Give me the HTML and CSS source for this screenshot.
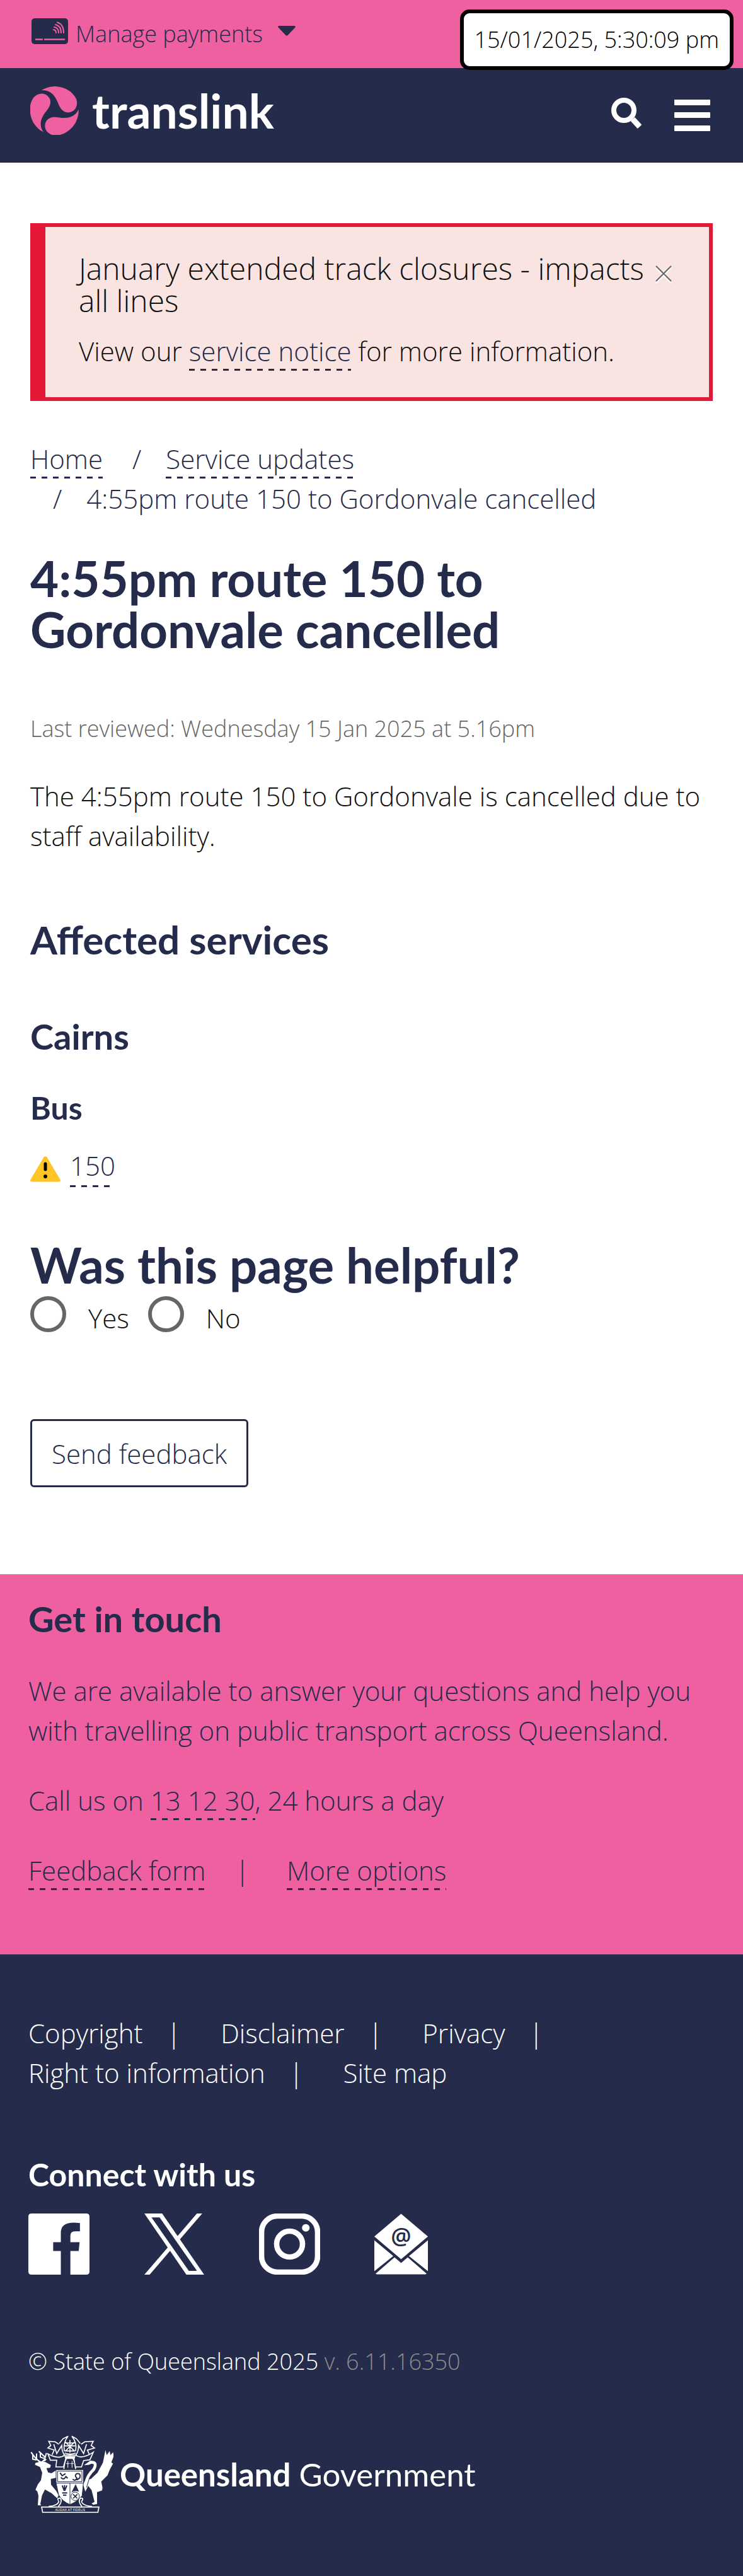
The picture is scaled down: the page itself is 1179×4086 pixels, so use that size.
FILE: index.html
```html
<!DOCTYPE html>
<html lang="en">
<head>
<meta charset="utf-8">
<meta name="viewport" content="width=device-width">
<title>4:55pm route 150 to Gordonvale cancelled | Translink</title>
<link rel="stylesheet" href="styles.css">
</head>
<body>
<div class="clock">15/01/2025, 5:30:09 pm</div>
<div class="topbar">
  <button class="payments" type="button">
    <svg class="card-icon" viewBox="0 0 58 42" aria-hidden="true"><rect width="58" height="41" rx="5" fill="#252b4b"/><g fill="none" stroke="#ef60a1" stroke-width="2" stroke-linecap="round"><path d="M7 33.500h10M21 33.500h31" stroke-width="2.500"/><path d="M35 18q4 1 4 5M36 14q7 1 7 9M38 10q9 2 9 13M41 6.500q10 3 10 16.500"/></g></svg>
    <span>Manage payments</span>
    <svg class="caret" viewBox="0 0 28 16" aria-hidden="true"><path d="M2 0h24q3 0 1 3L15.500 15q-1.500 1-3 0L1 3Q-1 0 2 0z" fill="#252b4b"/></svg>
  </button>
</div>
<header class="header">
  <a class="logo" href="#">
    <svg viewBox="0 0 77 77" aria-hidden="true" fill="#ef60a1"><path d="M18 6.300C24 2 33 0 40 0 56 1 68 9 73 20 77 32 70 41 60 41.500 51 41 47 34 44 26 40 16 33 5 18 6.300z"/><path d="M18 6.300C24 2 33 0 40 0 56 1 68 9 73 20 77 32 70 41 60 41.500 51 41 47 34 44 26 40 16 33 5 18 6.300z" transform="rotate(120 38.500 38.500)"/><path d="M18 6.300C24 2 33 0 40 0 56 1 68 9 73 20 77 32 70 41 60 41.500 51 41 47 34 44 26 40 16 33 5 18 6.300z" transform="rotate(240 38.500 38.500)"/></svg>
    <span>translink</span>
  </a>
  <div class="tools">
    <button class="search" type="button" aria-label="Search"><svg width="50" height="51" viewBox="0 0 50 51"><circle cx="20" cy="21" r="16" fill="none" stroke="#fff" stroke-width="8"/><path d="M34 35l11 12" stroke="#fff" stroke-width="9"/></svg></button>
    <button type="button" aria-label="Menu"><svg width="57" height="50" viewBox="0 0 57 50" fill="#fff"><rect width="57" height="9" rx="1"/><rect y="20" width="57" height="9" rx="1"/><rect y="41" width="57" height="9" rx="1"/></svg></button>
  </div>
</header>
<main class="main">
  <section class="alert">
    <div>
      <h2>January extended track closures - impacts all lines</h2>
      <p>View our <a class="link" href="#">service notice</a> for more information.</p>
    </div>
    <button class="close" type="button" aria-label="Close"><svg width="26" height="28" viewBox="0 0 26 28" fill="none"><path d="M1 4l24 24M25 4L1 28" stroke="#fff" stroke-width="2"/><path d="M1 1l24 24M25 1L1 25" stroke="#666" stroke-width="2"/></svg></button>
  </section>
  <nav aria-label="Breadcrumb">
    <ol class="crumbs">
      <li><a class="link" href="#">Home</a></li>
      <li><a class="link" href="#">Service updates</a></li>
      <li>4:55pm route 150 to Gordonvale cancelled</li>
    </ol>
  </nav>
  <h1>4:55pm route 150 to Gordonvale cancelled</h1>
  <p class="reviewed">Last reviewed: Wednesday 15 Jan 2025 at 5.16pm</p>
  <p>The 4:55pm route 150 to Gordonvale is cancelled due to staff availability.</p>
  <h2 class="affected">Affected services</h2>
  <h3 class="region">Cairns</h3>
  <h4 class="mode">Bus</h4>
  <p class="route">
    <svg width="48" height="41" viewBox="0 0 48 41" aria-hidden="true"><path d="M21.500 1.500q2.500-3 5 0L47.500 37q1.500 3.500-2 3.500h-43Q-1 40.500.500 37z" fill="#ffc425"/><path d="M24 12v9" stroke="#000" stroke-width="5" stroke-linecap="round"/><circle cx="24" cy="32" r="3"/></svg>
    <a class="link" href="#">150</a>
  </p>
  <form class="helpful">
    <fieldset>
      <legend>Was this page helpful?</legend>
      <div class="choices">
        <input type="radio" id="yes" name="helpful"><label for="yes">Yes</label>
        <input type="radio" id="no" name="helpful"><label for="no">No</label>
      </div>
    </fieldset>
    <button class="send" type="button">Send feedback</button>
  </form>
</main>
<section class="touch">
  <h3>Get in touch</h3>
  <p>We are available to answer your questions and help you with travelling on public transport across Queensland.</p>
  <p>Call us on <a class="link" href="#">13 12 30</a>, 24 hours a day</p>
  <ul class="touch-links">
    <li><a class="link" href="#">Feedback form</a></li>
    <li><a class="link" href="#">More options</a></li>
  </ul>
</section>
<footer class="footer">
  <ul class="legal">
    <li><a href="#">Copyright</a></li>
    <li><a href="#">Disclaimer</a></li>
    <li><a href="#">Privacy</a></li>
    <li><a href="#">Right to information</a></li>
    <li><a href="#">Site map</a></li>
  </ul>
  <h4>Connect with us</h4>
  <div class="social">
    <a href="#" aria-label="Facebook"><svg viewBox="0 0 96 96"><path fill="#fff" d="M5 0h86q5 0 5 5v86q0 5-5 5H66V59h13l1.500-14H66V35q0-7 7-7h8V15q-30-4-30 15v15H39v14h12v37H5q-5 0-5-5V5q0-5 5-5z"/></svg></a>
    <a href="#" aria-label="X"><svg viewBox="0 0 1200 1227"><path fill="#fff" d="M714 519L1161 0h-106L667 451 357 0H0l469 682L0 1227h106l410-477 327 477h357L714 519zM569 688l-48-68L144 80h163l305 436 48 68 396 567H893L569 688z"/></svg></a>
    <a href="#" aria-label="Instagram"><svg viewBox="0 0 96 96"><rect x="4" y="4" width="88" height="88" rx="25" fill="none" stroke="#fff" stroke-width="8.500"/><circle cx="48" cy="48" r="20.300" fill="none" stroke="#fff" stroke-width="8.500"/><circle cx="73.500" cy="22.500" r="6" fill="#fff"/></svg></a>
    <a href="#" aria-label="Email"><svg class="mail" viewBox="0 0 85 96"><g fill="#fff"><path d="M42.500 0L85 36 42.500 72 0 36z"/><path d="M0 42l30 25L0 91zM85 42L55 67l30 24z"/><path d="M32 69l10.500 9L53 69l30 26-2 1H4l-2-1z"/></g><text x="42.500" y="48" text-anchor="middle" font-family="Open Sans, sans-serif" font-weight="600" font-size="36" fill="#252b4b">@</text></svg></a>
  </div>
  <p class="copy">© State of Queensland 2025 <span>v. 6.11.16350</span></p>
  <a class="gov" href="#">
    <svg viewBox="24 24 396 369" aria-hidden="true">
      <!-- stag -->
      <path fill="#fff" d="M48 155l27-8 20 3 27 15-3 13-18 2 8 20 16 4 23-14 2 35-28 6 1 28 24 28 12 22-7 14-26-24-32-18-14 29-8 40 4 7-16-1 3-45-5-20-9-8 11-26 15-20 6-35-11-28-23-10z"/>
      <path fill="none" stroke="#fff" stroke-width="6" d="M72 150Q52 140 28 104M36 117v20l18 4M54 134V110M80 150q14-10 15-22l-30-28M72 107v20l18 6M95 128l6-20M92 145l8-8"/>
      <!-- crane -->
      <path fill="none" stroke="#fff" stroke-width="14" d="M312 152q34-2 14 34-30 28-36 62"/>
      <path fill="#fff" d="M280 166l30-22 12 12-20 8zM288 232l-12 26 10 34 14-28 16 20 14 56-14 8 8 6 18-4v-56l24-8 2-14-6-28 30-30 10-26 16-30-8-6 12-30-4-18-12 14-4-20-14 20-6-24-12 60-26 48-32 30z"/>
      <path stroke="#252b4b" stroke-width="3" d="M306 226l-14 46"/>
      <!-- crest and mantling -->
      <g fill="none" stroke="#fff" stroke-width="5">
        <path d="M162 62l18-22 24-12q-24 30-18 70M262 62l-18-22-22-12q26 30 18 70M192 56l42 42M234 56l-42 42M213 46v60M188 74h50M190 60l46 0M188 98h50M182 118h64M188 108q26 10 52 0"/>
        <path d="M160 66l-18-12-30-2 10 20-14 12 30 10-10 22M136 66l14 44 24-38q0 30 14 46M266 66l18-12 40-2-10 20 16 12-34 10 10 22M292 66l-14 44-24-38q0 30-14 46"/>
        <path d="M188 118q-30 22-80-6l12 30 30 0-4 32 36 0 12-42M240 118q30 22 84-14l-16 36-30 4-10 30-30 0-6-42M184 184q6-60 28-60t28 60"/>
        <path stroke-width="3" d="M203 146v32M195 158h16M223 146v32M215 158h16"/>
      </g>
      <path fill="#fff" d="M186 122h54l-6 14h-42z"/>
      <!-- shield -->
      <path fill="#fff" stroke="#252b4b" stroke-width="3" d="M147 187h130v64l-6 60q-22 28-58 42-36-14-54-46l-12-56z"/>
      <path fill="none" stroke="#252b4b" stroke-width="3" d="M147 251h130M213 251v100M154 194h116v50H154z"/>
      <path fill="none" stroke="#252b4b" stroke-width="6" d="M166 202l10 14 16-10M170 224q12 16 24-4l8 8M226 232q12 12 20-4-14-14 0-22 20-4 14 20l-14 10M186 288l-10-26M187 288v-28M188 288l10-26M176 298h24M180 308h16"/>
      <path fill="#252b4b" d="M240 256l16 36q-20-8-36 4z"/>
      <circle cx="238" cy="314" r="20" fill="#fff" stroke="#252b4b" stroke-width="3"/>
      <path stroke="#252b4b" stroke-width="5" d="M228 304l20 20M248 304l-20 20"/>
      <!-- motto scroll -->
      <g fill="none" stroke="#fff" stroke-width="5"><path d="M78 365h273l-5 25H83zM112 362q44-4 48-24-12-16 6-16 14 14-8 40M318 362q-46-4-50-24 14-16-4-16-16 14 6 40"/></g>
      <text x="214" y="384" text-anchor="middle" font-family="Open Sans, sans-serif" font-size="17" fill="#fff">AUDAX AT FIDELIS</text>
    </svg>
    <span><b>Queensland</b> Government</span>
  </a>
</footer>
</body>
</html>
```
FILE: styles.css
```css
* { box-sizing: border-box; }
body { margin: 0; background: #fff; color: #111; font: 300 42px/63px "Open Sans", "Noto Sans", sans-serif; }
h1, h2, h3, h4, p, ol, ul, fieldset, legend { margin: 0; padding: 0; }
ul, ol { list-style: none; }
fieldset { min-width: 0; border: 0; }
a { color: inherit; text-decoration: none; }
svg { display: block; flex: none; }
button { padding: 0; border: 0; background: none; color: inherit; font: inherit; }
h1, h3, h4, legend, .affected { color: #252b4b; font-family: Lato, sans-serif; font-weight: 700; }
.link { padding-bottom: 3px; background: repeating-linear-gradient(90deg, #252b4b 0 9px, transparent 9px 18px) left bottom / 100% 3px no-repeat; color: #252b4b; }

.clock { position: absolute; top: 15px; right: 15px; padding: 12px 17px; border: 6px solid #000; border-radius: 15px; background: #fff; color: #000; font-size: 36px; line-height: 60px; }
.topbar { padding: 24px 48px; background: #ef60a1; color: #252b4b; }
.payments { display: flex; align-items: center; font-size: 36px; line-height: 60px; }
.card-icon { width: 58px; height: 42px; margin: 0 12px 8px 2px; }
.caret { width: 28px; height: 16px; margin: 0 0 10px 24px; }
.header { display: flex; justify-content: space-between; align-items: center; min-height: 150px; padding: 0 52px 0 48px; background: #252b4b; color: #fff; }
.logo { display: flex; align-items: center; gap: 21px; padding-bottom: 16px; font-family: Lato, sans-serif; font-weight: 700; font-size: 75px; line-height: 81px; }
.logo svg { width: 77px; height: 77px; }
.tools { display: flex; align-items: center; gap: 50px; }
.search { padding-bottom: 8px; }

.main { padding: 96px 48px 138px; }
.alert { display: flex; justify-content: space-between; padding: 40px 59px 42px 53px; border: 6px solid #e31937; border-left-width: 24px; background: #f9e4e2; }
.alert h2 { margin-bottom: 23px; font-size: 48px; line-height: 51px; font-weight: 300; }
.close { align-self: flex-start; padding-top: 21px; }
.crumbs { margin-top: 60px; color: #252b4b; }
.crumbs li { display: inline-block; }
.crumbs li + li::before { content: "/"; padding: 0 39px 0 36px; }
h1 { margin: 55px 0 90px; font-size: 78px; line-height: 81px; }
.reviewed { margin-bottom: 48px; color: #666; font-size: 36px; line-height: 54px; }
.affected { margin-top: 96px; font-size: 62px; line-height: 75px; }
.region { margin-top: 78px; font-size: 56px; line-height: 75px; }
.mode { margin-top: 45px; font-size: 50px; line-height: 63px; }
.route { display: flex; align-items: center; gap: 15px; margin-top: 28px; }
.route svg { margin-top: 8px; }
.helpful { margin-top: 83px; }
legend { font-size: 78px; line-height: 81px; }
.choices { display: flex; align-items: flex-start; margin-top: 9px; }
.choices input { appearance: none; width: 57px; height: 57px; margin: 0; border: 6px solid #666; border-radius: 50%; }
.choices label { padding: 3px 30px 0 35px; }
.send { margin-top: 129px; min-height: 108px; padding: 0 31px; border: 3px solid #252b4b; border-radius: 6px; color: #252b4b; }

.touch { padding: 33px 45px 102px; background: #ef60a1; color: #252b4b; }
.touch h3 { margin-bottom: 45px; font-size: 56px; line-height: 75px; }
.touch p + p, .touch-links { margin-top: 48px; }
.touch li, .legal li { display: inline-block; }
.touch li + li::before { content: "|"; padding: 0 59px 0 36px; }
.footer { padding: 93px 45px 100px; background: #252b4b; color: #fff; }
.legal li:not(:last-child)::after { content: "|"; padding: 0 52px 0 38px; }
.footer h4 { margin-top: 99px; color: #fff; font-size: 50px; line-height: 63px; }
.social { display: flex; gap: 86px; margin-top: 30px; }
.social svg { width: 97px; height: 97px; }
.social .mail { width: 85px; }
.copy { margin-top: 111px; font-size: 36px; line-height: 54px; }
.copy span { color: #8c8c8c; }
.gov { display: flex; align-items: center; gap: 10px; margin-top: 90px; font: 400 51px/63px Lato, sans-serif; }
.gov svg { width: 132px; height: 123px; margin-left: 3px; }
```
